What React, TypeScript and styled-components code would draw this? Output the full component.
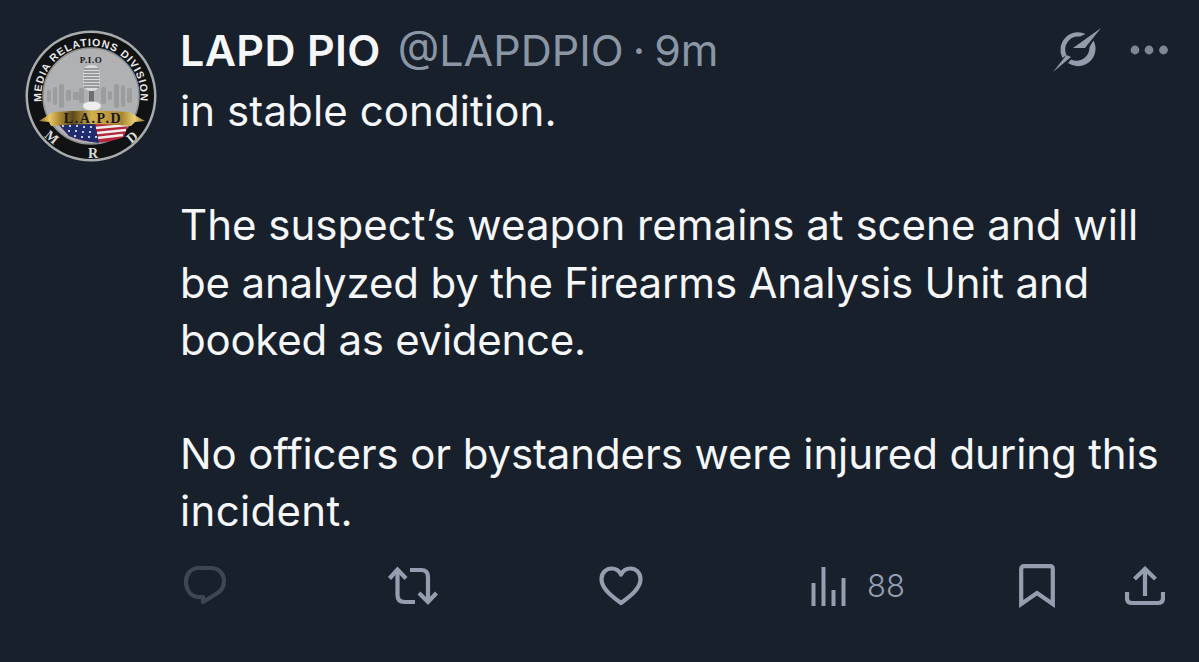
import React from "react";
import styled, { createGlobalStyle } from "styled-components";

const Global = createGlobalStyle`
  html, body { margin: 0; padding: 0; background: #18202c; }
  #root { width: 1199px; height: 662px; overflow: hidden; }
`;

const Tweet = styled.div`
  width: 1199px;
  height: 662px;
  box-sizing: border-box;
  background: #18202c;
  display: flex;
  padding: 25px 0 0 25px;
  font-family: Inter, "Liberation Sans", sans-serif;
  color: #f4f6f8;
`;
const AvatarBox = styled.div`
  width: 132px;
  height: 132px;
  margin-top: 5px;
  flex: none;
`;
const Main = styled.div`
  margin-left: 23px;
  width: 1019px;
  display: flex;
  flex-direction: column;
`;
const Header = styled.div`
  display: flex;
  align-items: center;
  height: 50px;
`;
const Name = styled.span`
  font-size: 43px;
  font-weight: 600;
  letter-spacing: 0.35px;
`;
const Meta = styled.span`
  font-size: 43px;
  color: #8b96a5;
  margin-left: 17px;
  word-spacing: -3px;
`;
const HeaderIcons = styled.div`
  margin-left: auto;
  display: flex;
  align-items: center;
  gap: 28px;
  padding-right: 31px;
`;
const Body = styled.div`
  font-size: 42px;
  line-height: 57.2px;
  margin-top: 7px;
`;
const Line = styled.div<{ $track?: number }>`
  height: 57.2px;
  white-space: nowrap;
  letter-spacing: ${(p) => p.$track ?? 0}px;
`;
const Actions = styled.div`
  display: grid;
  grid-template-columns: 204px 212px 212px 208px 106px auto;
  align-items: center;
  margin-top: 21px;
  margin-left: 3px;
  height: 50px;
`;
const Action = styled.div`
  display: flex;
  align-items: center;
  gap: 20px;
  color: #949eae;
`;
const Count = styled.span`
  font-size: 31px;
  font-weight: 300;
  color: #949eae;
  letter-spacing: 0;
`;

const Logo = () => (
  <svg width="132" height="132" viewBox="0 0 132 132">
    <defs>
      <path id="arcTop" d="M 16.5 70 A 49.7 49.7 0 1 1 115.5 70" fill="none" />
      <linearGradient id="gold" x1="0" x2="1" y1="0" y2="0">
        <stop offset="0" stopColor="#8a6d22" />
        <stop offset="0.1" stopColor="#e7c765" />
        <stop offset="0.2" stopColor="#a88632" />
        <stop offset="0.32" stopColor="#5e4a18" />
        <stop offset="0.5" stopColor="#d4b14e" />
        <stop offset="0.78" stopColor="#a88632" />
        <stop offset="0.9" stopColor="#e9cf72" />
        <stop offset="1" stopColor="#9c7d2c" />
      </linearGradient>
      <clipPath id="inner"><circle cx="66" cy="66" r="47" /></clipPath>
    </defs>
    <circle cx="66" cy="66" r="65.5" fill="#a9abad" />
    <circle cx="66" cy="66" r="63" fill="#111214" />
    <circle cx="66" cy="66" r="48" fill="#b0b1b2" stroke="#8e8f91" strokeWidth="1.5" />
    <g clipPath="url(#inner)" fill="#9a9c9e">
      <rect x="22" y="60" width="4" height="12" rx="2" />
      <rect x="28" y="57" width="4" height="18" rx="2" />
      <rect x="34" y="54" width="5" height="24" rx="2" />
      <rect x="41" y="60" width="5" height="11" rx="2" />
      <rect x="48" y="62" width="6" height="8" rx="2" />
      <rect x="54" y="58" width="5" height="15" rx="2" />
      <rect x="76" y="57" width="5" height="17" rx="2" />
      <rect x="83" y="61" width="4" height="9" rx="2" />
      <rect x="89" y="54" width="5" height="24" rx="2" />
      <rect x="96" y="55" width="4" height="22" rx="2" />
      <rect x="102" y="58" width="5" height="15" rx="2" />
    </g>
    <rect x="58" y="35" width="17" height="26" rx="8" fill="#dcdcdc" />
    <g stroke="#55585c" strokeWidth="1.1">
      <path d="M59 39H74M58.5 42H74.5M58.5 45H74.5M58.5 48H74.5M58.5 51H74.5M58.5 54H74.5M59 57H74" />
    </g>
    <path d="M64 61h5v12h-5z" fill="#6d6f72" />
    <ellipse cx="67" cy="76" rx="9" ry="4.5" fill="#eeeeee" />
    <text x="66" y="33" textAnchor="middle" fontFamily="'Liberation Serif', serif" fontWeight="700" fontSize="9" fill="#17181a" letterSpacing="0.6">P.I.O</text>
    <text fontFamily="'Liberation Sans', sans-serif" fontWeight="700" fontSize="10.5" fill="#e8e8e8" letterSpacing="0.95">
      <textPath href="#arcTop" startOffset="50%" textAnchor="middle">MEDIA RELATIONS DIVISION</textPath>
    </text>
    <path d="M31 92 L105 90 L99 107 Q72 118 44 106Z" fill="#b5263a" />
    <path d="M70 98 L103 95 M72 103 L101 100 M72 108 L98 105" stroke="#eeeeee" strokeWidth="2.4" />
    <path d="M32 92 L70 93 L74 113 Q56 111 44 106Z" fill="#1f2d6e" />
    <g fill="#fff">
      <circle cx="38" cy="96" r="1" /><circle cx="45" cy="96" r="1" /><circle cx="52" cy="96" r="1" /><circle cx="59" cy="97" r="1" /><circle cx="66" cy="97" r="1" />
      <circle cx="44" cy="101" r="1" /><circle cx="51" cy="101" r="1" /><circle cx="58" cy="102" r="1" /><circle cx="65" cy="102" r="1" />
      <circle cx="50" cy="106" r="1" /><circle cx="57" cy="107" r="1" /><circle cx="64" cy="107" r="1" /><circle cx="71" cy="107" r="1" />
    </g>
    <path d="M14 91 L28 82 Q66 79 104 82 L120 91 L110 92 L106 96 Q66 92 26 96 L24 92Z" fill="url(#gold)" />
    <text x="68" y="93" textAnchor="middle" fontFamily="'Liberation Serif', serif" fontWeight="700" fontSize="14" fill="#17181a" letterSpacing="1.6">L.A.P.D</text>
    <g fontFamily="'Liberation Serif', serif" fontWeight="700" fontSize="14" fill="#dcdcdc" textAnchor="middle">
      <text x="27" y="112" transform="rotate(40 27 107)">M</text>
      <text x="68" y="128">R</text>
      <text x="107" y="112" transform="rotate(-40 107 107)">D</text>
    </g>
  </svg>
);

const Slash = () => (
  <svg width="50" height="46" viewBox="0 0 50 46">
    <path d="M10.5 31 A17.5 17.5 0 0 1 33.5 7 L28 9.6 A13 13 0 0 0 14.5 28Z" fill="#939caa" />
    <path d="M16 36 A17.5 17.5 0 0 0 41.5 13.5 L37.5 20 A13 13 0 0 1 19 32.5Z" fill="#939caa" />
    <path d="M1 45 L19 30 L14.5 28Z" fill="#939caa" />
    <path d="M49 1 L21 21 L33 21 Z" fill="#939caa" />
  </svg>
);

const Dots = () => (
  <svg width="38" height="10" viewBox="0 0 38 10" fill="#7d8795">
    <circle cx="5" cy="5" r="4.4" /><circle cx="19" cy="5" r="4.4" /><circle cx="33.5" cy="5" r="4.4" />
  </svg>
);

const Reply = () => (
  <svg width="44" height="44" viewBox="0 0 44 44" fill="none" stroke="#3d4652" strokeWidth="4.2" strokeLinejoin="round">
    <path d="M16 4 H28 C36 4 41 10 41 17 C41 24 38 27 33 30 L20 38 V33 H16 C8 33 3 26 3 18 C3 10 8 4 16 4 Z" />
  </svg>
);
const Retweet = () => (
  <svg width="52" height="40" viewBox="0 0 52 40" fill="none" stroke="#949eae" strokeWidth="4.2">
    <path d="M2.5 12.5 L10.5 3.5 L19 12.5" strokeLinejoin="miter" />
    <path d="M10.5 4 V29 Q10.5 36 17.5 36 H28" />
    <path d="M23 4 H34 Q41 4 41 11 V35" />
    <path d="M32 27 L41 36 L49.5 27" />
  </svg>
);
const Heart = () => (
  <svg width="44" height="40" viewBox="0 0 44 40" fill="none" stroke="#949eae" strokeWidth="4.2" strokeLinejoin="round">
    <path d="M22 37 C14 31 2.5 23 2.5 13 C2.5 6.5 7.5 2.5 12.5 2.5 C16.5 2.5 20 4.5 22 8.5 C24 4.5 27.5 2.5 31.5 2.5 C36.5 2.5 41.5 6.5 41.5 13 C41.5 23 30 31 22 37 Z" />
  </svg>
);
const Views = () => (
  <svg width="36" height="40" viewBox="0 0 36 40" fill="#949eae">
    <rect x="0.5" y="17" width="4" height="23" />
    <rect x="10.5" y="1" width="4" height="39" />
    <rect x="20.5" y="24" width="4" height="16" />
    <rect x="30.5" y="12" width="4" height="28" />
  </svg>
);
const Bookmark = () => (
  <svg width="36" height="44" viewBox="0 0 36 44" fill="none" stroke="#949eae" strokeWidth="4.2">
    <path d="M2.2 40 V5 Q2.2 2.2 5 2.2 H31 Q33.8 2.2 33.8 5 V40 L18 29 Z" />
  </svg>
);
const Share = () => (
  <svg width="40" height="40" viewBox="0 0 40 40" fill="none" stroke="#949eae" strokeWidth="4.2">
    <path d="M20 30 V4" />
    <path d="M9.5 13 L20 3 L30.5 13" />
    <path d="M2 26 V32 Q2 37 7 37 H33 Q38 37 38 32 V26" />
  </svg>
);

const lines: { text: string; track?: number }[] = [
  { text: "in stable condition.", track: 0.1 },
  { text: "\u00a0" },
  { text: "The suspect’s weapon remains at scene and will", track: 0.02 },
  { text: "be analyzed by the Firearms Analysis Unit and", track: -0.18 },
  { text: "booked as evidence.", track: -0.26 },
  { text: "\u00a0" },
  { text: "No officers or bystanders were injured during this", track: -0.12 },
  { text: "incident.", track: 0.33 },
];

export default function App() {
  return (
    <Tweet>
      <Global />
      <AvatarBox><Logo /></AvatarBox>
      <Main>
        <Header>
          <Name>LAPD PIO</Name>
          <Meta>@LAPDPIO · 9m</Meta>
          <HeaderIcons><Slash /><Dots /></HeaderIcons>
        </Header>
        <Body>
          {lines.map((l, i) => (
            <Line key={i} $track={l.track}>{l.text}</Line>
          ))}
        </Body>
        <Actions>
          <Action><Reply /></Action>
          <Action><Retweet /></Action>
          <Action><Heart /></Action>
          <Action><Views /><Count>88</Count></Action>
          <Action><Bookmark /></Action>
          <Action><Share /></Action>
        </Actions>
      </Main>
    </Tweet>
  );
}
